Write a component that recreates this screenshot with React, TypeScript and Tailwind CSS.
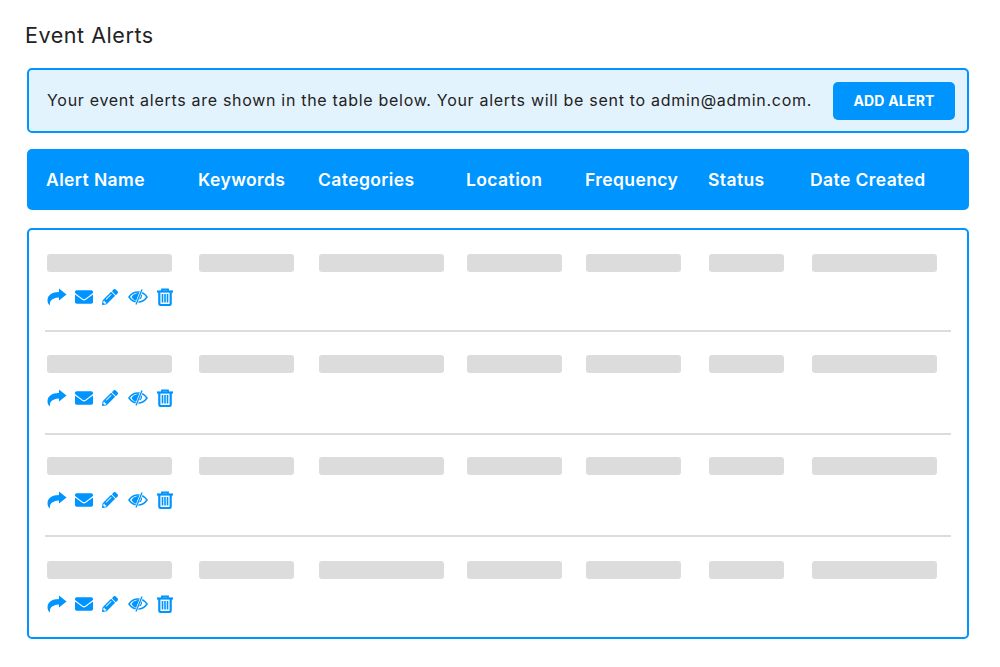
import React from "react";
import { FaEnvelope, FaPencilAlt } from "react-icons/fa";

const columns = [
  { title: "Alert Name", width: "w-[125px]" },
  { title: "Keywords", width: "w-[95px]" },
  { title: "Categories", width: "w-[125px]" },
  { title: "Location", width: "w-[95px]" },
  { title: "Frequency", width: "w-[95px]" },
  { title: "Status", width: "w-[75px]" },
  { title: "Date Created", width: "w-[125px]" },
];

const gridCols = "grid grid-cols-[152px_120px_148px_119px_123px_103px_125px]";

function ShareIcon() {
  return (
    <svg width="20" height="18" viewBox="0 0 20 18" fill="currentColor">
      <path d="M19.500 6.500L12 .5V4C5 4 .5 7 .5 12.500c0 2 1 4 2.500 5-.5-4 1-7.500 9-8v3z" />
    </svg>
  );
}

function EyeOff() {
  return (
    <svg width="20" height="16" viewBox="0 0 20 16" fill="none">
      <path d="M1 8c2.200-3.300 5.200-5 9-5s6.800 1.700 9 5c-2.200 3.300-5.200 5-9 5s-6.800-1.700-9-5z" stroke="currentColor" strokeWidth="1.500" />
      <path d="M3.500 8c1.300-2 3.800-3.800 8-4.200L8.500 12C6 11.400 4.600 9.800 3.500 8z" fill="currentColor" />
      <path d="M14 .5L8 15.500" stroke="#fff" strokeWidth="2.600" />
      <path d="M14 .5L8 15.500" stroke="currentColor" strokeWidth="1.300" />
      <path d="M13 5.500c.9 1.500.4 3.500-1.500 4.500" stroke="currentColor" strokeWidth="1.200" />
    </svg>
  );
}

function TrashIcon() {
  return (
    <svg width="16" height="18" viewBox="0 0 16 18" fill="none" stroke="currentColor">
      <path d="M0 3.500h16" strokeWidth="2.200" />
      <path d="M5 3.500V1.500h6v2" strokeWidth="1.800" />
      <path d="M2.300 4v11.500c0 1 .6 1.500 1.500 1.500h8.400c.9 0 1.500-.5 1.500-1.500V4" strokeWidth="2.200" />
      <path d="M5.500 6v8.500M8 6v8.500M10.500 6v8.500" strokeWidth="1.600" />
    </svg>
  );
}

function Row({ height, last }: { height: string; last?: boolean }) {
  return (
    <div className={`${height} px-[2px] ${last ? "" : "border-b-2 border-[#dcdcdc]"}`}>
      <div className={gridCols}>
        {columns.map((c) => (
          <div key={c.title} className={`${c.width} h-[18px] rounded-[3px] bg-[#dcdcdc]`} />
        ))}
      </div>
      <div className="mt-4 flex h-[18px] items-center text-[#0094ff]">
        <ShareIcon />
        <FaEnvelope className="ml-[8px] h-[18px] w-[18px]" />
        <FaPencilAlt className="ml-[9px] h-[16px] w-[16px]" />
        <span className="ml-[10px] flex">
          <EyeOff />
        </span>
        <span className="ml-[9px] flex">
          <TrashIcon />
        </span>
      </div>
    </div>
  );
}

export default function App() {
  return (
    <div className="h-[667px] w-[1000px] bg-white pl-[27px] pr-[31px] font-['Inter',sans-serif] text-[#222]">
      <h1 className="-ml-[2px] pt-[21px] text-[21.5px] leading-[28px] tracking-[0.55px]">Event Alerts</h1>
      <div className="mt-[19px] flex h-[65px] items-center justify-between rounded-[5px] border-2 border-[#0094ff] bg-[#e3f3fe] pl-[18px] pr-[12px]">
        <p className="-mt-px whitespace-nowrap text-[16px] tracking-[0.7px]">
          Your event alerts are shown in the table below. Your alerts will be sent to admin@admin.com.
        </p>
        <button className="h-[38px] w-[122px] rounded-[5px] bg-[#0094ff] text-[14px] font-bold tracking-[0.2px] text-white">
          ADD ALERT
        </button>
      </div>
      <div className="mt-4 h-[61px] rounded-[5px] bg-[#0094ff] pl-[19px] pt-px text-white">
        <div className={`${gridCols} h-full items-center text-[17.5px] font-semibold tracking-[0.4px]`}>
          {columns.map((c, i) => (
            <span key={c.title} className={`whitespace-nowrap ${i === 6 ? "-ml-px" : ""}`}>
              {c.title}
            </span>
          ))}
        </div>
      </div>
      <div className="mt-[18px] h-[411px] rounded-[5px] border-2 border-[#0094ff] px-[16px] pt-[24px]">
        <Row height="h-[78px]" />
        <div className="h-[23px]" />
        <Row height="h-[80px]" />
        <div className="h-[22px]" />
        <Row height="h-[80px]" />
        <div className="h-[24px]" />
        <Row height="h-[60px]" last />
      </div>
    </div>
  );
}
